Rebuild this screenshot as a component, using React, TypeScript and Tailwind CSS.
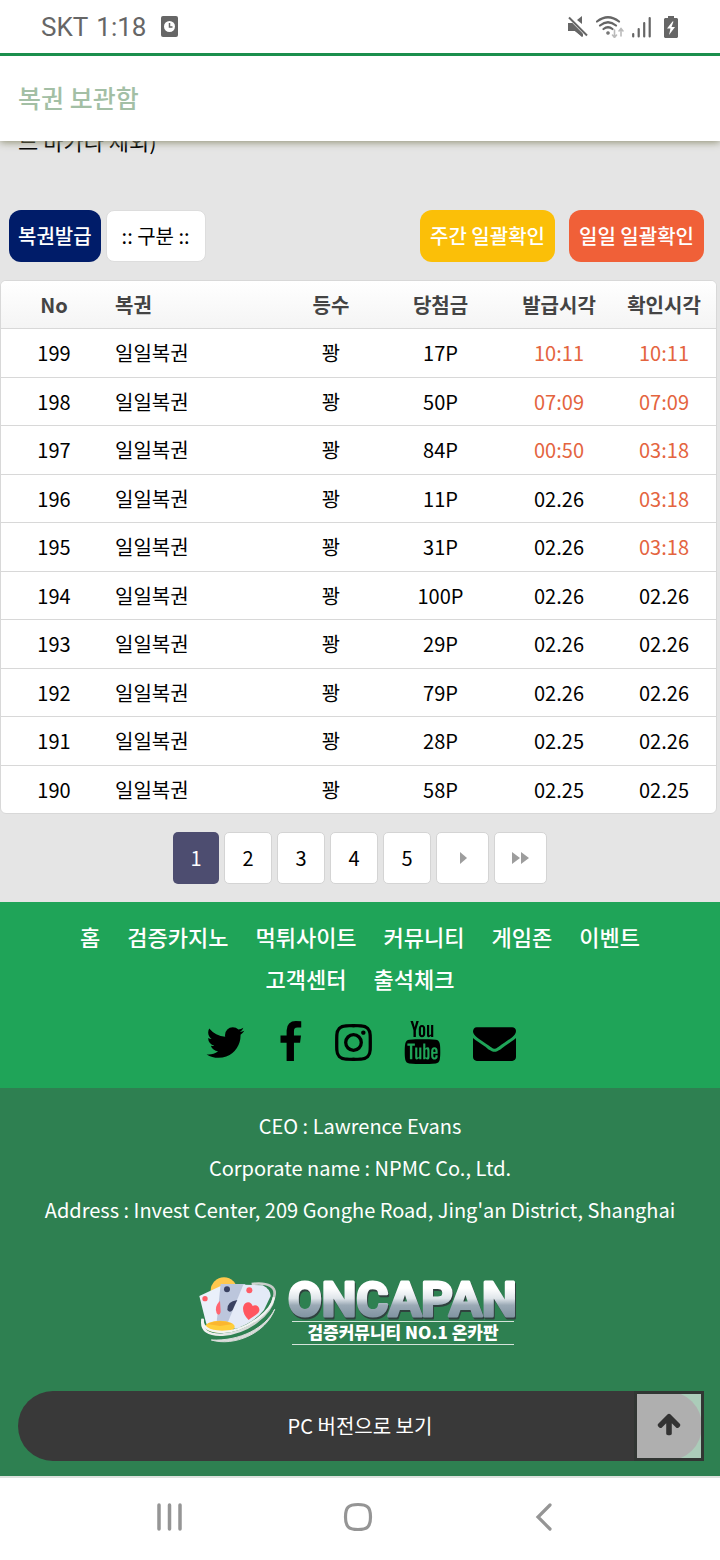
import type { ReactNode } from "react";
import { TfiYoutube } from "react-icons/tfi";

const tickets = [
  { no: 199, prize: "17P", issued: "10:11", checked: "10:11" },
  { no: 198, prize: "50P", issued: "07:09", checked: "07:09" },
  { no: 197, prize: "84P", issued: "00:50", checked: "03:18" },
  { no: 196, prize: "11P", issued: "02.26", checked: "03:18" },
  { no: 195, prize: "31P", issued: "02.26", checked: "03:18" },
  { no: 194, prize: "100P", issued: "02.26", checked: "02.26" },
  { no: 193, prize: "29P", issued: "02.26", checked: "02.26" },
  { no: 192, prize: "79P", issued: "02.26", checked: "02.26" },
  { no: 191, prize: "28P", issued: "02.25", checked: "02.26" },
  { no: 190, prize: "58P", issued: "02.25", checked: "02.25" },
];

const menu = ["홈", "검증카지노", "먹튀사이트", "커뮤니티", "게임존", "이벤트", "고객센터", "출석체크"];

const twitterPath =
  "M1684 408q-67 98-162 167 1 14 1 42 0 130-38 259.5t-115.5 248.5-184.5 210.5-258 146-323 54.5q-271 0-496-145 35 4 78 4 225 0 401-138-105-2-188-64.5t-114-159.5q33 5 61 5 43 0 85-11-112-23-185.5-111.5t-73.5-205.5v-4q68 38 146 41-66-44-105-115t-39-154q0-88 44-163 121 149 294.5 238.5t371.5 99.5q-8-38-8-74 0-134 94.5-228.5t228.5-94.5q140 0 236 102 109-21 205-78-37 115-142 178 93-10 186-50z";
const facebookPath =
  "M1343 12v264h-157q-86 0-116 36t-30 108v189h293l-39 296h-254v759h-306v-759h-255v-296h255v-218q0-186 104-288.5t277-102.5q147 0 228 12z";
const instagramPath =
  "M1152 896q0-106-75-181t-181-75-181 75-75 181 75 181 181 75 181-75 75-181zm138 0q0 164-115 279t-279 115-279-115-115-279 115-279 279-115 279 115 115 279zm108-410q0 38-27 65t-65 27-65-27-27-65 27-65 65-27 65 27 27 65zm-502-220q-7 0-76.5-.5t-105.5 0-96.5 3-103 10-71.5 18.5q-50 20-88 58t-58 88q-11 29-18.5 71.5t-10 103-3 96.5 0 105.5.5 76.5-.5 76.5 0 105.5 3 96.5 10 103 18.5 71.5q20 50 58 88t88 58q29 11 71.5 18.5t103 10 96.5 3 105.5 0 76.5-.5 76.5.5 105.5 0 96.5-3 103-10 71.5-18.5q50-20 88-58t58-88q11-29 18.5-71.5t10-103 3-96.5 0-105.5-.5-76.5.5-76.5 0-105.5-3-96.5-10-103-18.5-71.5q-20-50-58-88t-88-58q-29-11-71.5-18.5t-103-10-96.5-3-105.5 0-76.5.5zm768 630q0 229-5 317-10 208-124 322t-322 124q-88 5-317 5t-317-5q-208-10-322-124t-124-322q-5-88-5-317t5-317q10-208 124-322t322-124q88-5 317-5t317 5q208 10 322 124t124 322q5 88 5 317z";
const envelopePath =
  "M1792 710v794q0 66-47 113t-113 47h-1472q-66 0-113-47t-47-113v-794q44 49 101 87 362 246 497 345 57 42 92.5 65.5t94.5 48 110 24.5h2q51 0 110-24.5t94.5-48 92.5-65.5q170-123 498-345 57-39 100-87zm0-294q0 79-49 151t-122 123q-376 261-468 325-10 7-42.5 31t-54 38.5-52 32.5-57.5 27-50 9h-2q-23 0-50-9t-57.5-27-52-32.5-54-38.5-42.5-31q-91-64-262-182.5t-205-142.5q-62-42-117-115.5t-55-136.5q0-78 41.5-130t118.5-52h1472q65 0 112.5 47t47.5 113z";
const arrowUpPath =
  "M1675 971q0 51-37 90l-75 75q-38 38-91 38-54 0-90-38l-294-293v704q0 52-37.5 84.5t-90.5 32.5h-128q-53 0-90.5-32.5t-37.5-84.5v-704l-294 293q-36 38-90 38t-90-38l-75-75q-38-38-38-90 0-53 38-91l651-651q35-37 90-37 54 0 91 37l651 651q37 39 37 91z";

function StatusBar() {
  return (
    <div className="flex h-[53px] items-center justify-between bg-white px-[41px] font-[Roboto,sans-serif] text-[26px] text-[#666]">
      <div className="flex items-center gap-2 pt-0.5">
        <span>SKT</span>
        <span>1:18</span>
        <svg className="ml-1 h-[22px] w-[22px]" viewBox="0 0 22 22" fill="none">
          <rect x="3" y="0" width="17" height="21" rx="2" fill="#666" />
          <circle cx="11.500" cy="10.500" r="5.500" fill="#fff" />
          <path d="M11.500 7V11H14.500" stroke="#666" strokeWidth="1.500" />
        </svg>
      </div>
      <div className="flex items-center gap-2">
        <svg className="h-[22px] w-[20px]" viewBox="0 0 20 22" fill="#666">
          <path d="M0 7h5l10 10v4L7 15H0zM9 4l5-4v8z" />
          <path d="M1 1l18 18" stroke="#fff" strokeWidth="4" />
          <path d="M0 7h4l10 10v4L7 15H0z" />
          <path d="M1 1.500l18 18" stroke="#666" strokeWidth="2" />
        </svg>
        <svg className="h-[22px] w-[28px]" viewBox="0 0 28 22" fill="none" stroke="#666" strokeWidth="2.200" strokeLinecap="round">
          <path d="M1 5.500Q12 -3 23 5.500M4 9.500Q12 3 20 9.500M7.500 13Q12 9.500 16.500 13" />
          <circle cx="12" cy="17" r="0.700" />
          <path d="M18.500 14v7m-2-2l2 2.500 2-2.500M25 20v-7m-2 2l2-2.500 2 2.500" stroke="#bbb" strokeWidth="1.600" />
        </svg>
        <svg className="h-[22px] w-[19px]" viewBox="0 0 19 22" stroke="#666" strokeWidth="2.200" strokeLinecap="round">
          <path d="M1.200 18v2.500M6.700 13v7.500M12.200 7v13.500M17.700 2v18.500" />
        </svg>
        <svg className="ml-1 h-[22px] w-[16px]" viewBox="0 0 16 22">
          <path d="M5 0h6v2h3l1 1v18l-1 1H2l-1-1V3l1-1h3z" fill="#666" />
          <path d="M9.500 5.500L4 12.500h3.500L6 19l6-8H8.500l2-5.500z" fill="#fff" />
        </svg>
      </div>
    </div>
  );
}

function PageButton({ label, className, children }: { label: string; className: string; children: ReactNode }) {
  return (
    <button type="button" aria-label={label} className={`flex h-[52px] items-center justify-center rounded-[5px] ${className}`}>
      {children}
    </button>
  );
}

function SocialLink({ label, className, path }: { label: string; className: string; path: string }) {
  return (
    <a href="#" aria-label={label} className={className}>
      <svg className="h-[43px] w-[43px]" viewBox="0 0 1792 1792">
        <path d={path} />
      </svg>
    </a>
  );
}

function Logo() {
  return (
    <svg className="h-[100px] w-[340px]" viewBox="0 0 340 100" role="img" aria-label="ONCAPAN">
      <defs>
        <linearGradient id="metal" x1="0" y1="0" x2="0" y2="1">
          <stop offset="0.300" stopColor="#fff" />
          <stop offset="0.480" stopColor="#dfe5ea" />
          <stop offset="0.600" stopColor="#9aa9b5" />
          <stop offset="0.820" stopColor="#8093a1" />
        </linearGradient>
        <linearGradient id="ring" x1="0" y1="0" x2="1" y2="0">
          <stop offset="0" stopColor="#f5f5f5" />
          <stop offset="1" stopColor="#c3c8c5" />
        </linearGradient>
      </defs>
      <g transform="scale(0.3333)">
        <path d="M185 72C235 66 262 80 252 112C242 168 170 218 98 224C56 226 32 212 38 178" fill="none" stroke="url(#ring)" strokeWidth="8" />
        <circle cx="102" cy="92" r="40" fill="#ffc84d" />
        <path d="M28 108L92 78L140 196L62 212Q50 200 46 180z" fill="#eaf0fa" />
        <path d="M92 72H166L150 205L78 205z" fill="#bcc6dc" />
        <path d="M160 74L218 76Q240 86 242 108L222 150Q190 190 136 206L110 196z" fill="#e4eaf7" />
        <circle cx="45" cy="116" r="8" fill="#ff5c66" />
        <circle cx="111" cy="88" r="9" fill="#3a4160" />
        <circle cx="178" cy="91" r="9" fill="#ff5c66" />
        <path d="M90 122Q72 140 80 160Q88 170 92 156z" fill="#ff6570" />
        <path d="M142 120Q110 124 112 150Q120 160 128 150Q134 136 142 120z" fill="#3a4160" />
        <path d="M176 180C158 164 154 140 166 130C176 122 186 130 188 138C198 132 210 140 208 152C204 164 188 170 176 180z" fill="#ff565f" />
        <ellipse cx="90" cy="200" rx="44" ry="18" fill="#ffce3b" />
        <path d="M52 192Q90 174 128 192L90 198z" fill="#fbb62f" />
        <path d="M38 176Q34 214 96 216Q150 216 206 174Q246 144 252 112" fill="none" stroke="#f2f4f2" strokeWidth="7" />
        <path d="M64 240C130 260 226 222 254 148C226 204 150 244 64 240z" fill="#d9dcda" stroke="#d9dcda" strokeWidth="3" />
      </g>
      <text
        x="98"
        y="56"
        fontSize="49"
        fill="url(#metal)"
        stroke="url(#metal)"
        strokeWidth="3"
        strokeLinejoin="round"
        className="font-[Roboto,sans-serif] font-bold drop-shadow-[1px_2px_0_#2f423e]"
      >
        ONCAPAN
      </text>
      <path d="M102 61.500H324M102 84.500H324" stroke="#d5e3da" strokeWidth="1" />
      <text x="213" y="79" textAnchor="middle" fontSize="17" fill="#fff" className="font-['Noto_Sans_CJK_KR',sans-serif] font-black">
        검증커뮤니티 NO.1 온카판
      </text>
    </svg>
  );
}

export default function App() {
  return (
    <div className="bg-[#e5e5e5] font-['Noto_Sans_CJK_KR',sans-serif] text-xl text-black">
      <header className="relative z-10 bg-white shadow-[0_1px_8px_#8a8a6c]">
        <StatusBar />
        <div className="flex h-[88px] items-center border-t-3 border-[#1b8f4d] px-[18px] pb-0.5">
          <h1 className="text-[25px] font-medium text-[#a3bfa5]">복권 보관함</h1>
        </div>
      </header>

      <main>
        <div className="flex h-[18px] items-end overflow-hidden px-[18px]">
          <p className="text-[22px] leading-[38px]">드 바카라 제외)</p>
        </div>

        <div className="flex items-center justify-between pt-[51px] pr-4 pl-[9px]">
          <div className="flex items-center gap-[5px]">
            <button type="button" className="h-[52px] rounded-xl bg-[#001c69] px-[9px] font-medium text-white">
              복권발급
            </button>
            <select aria-label="구분" className="h-[52px] w-[100px] appearance-none rounded-lg border border-[#ddd] bg-white text-center">
              <option>:: 구분 ::</option>
            </select>
          </div>
          <div className="flex gap-[14px]">
            <button type="button" className="h-[52px] w-[135px] rounded-xl bg-[#fbbf08] font-medium text-white">
              주간 일괄확인
            </button>
            <button type="button" className="h-[52px] w-[135px] rounded-xl bg-[#f06038] font-medium text-white">
              일일 일괄확인
            </button>
          </div>
        </div>

        <div className="mt-[18px] mr-[3px] overflow-hidden rounded-md border border-[#d8d8d8] bg-white">
          <table className="w-full table-fixed border-separate border-spacing-0 text-center leading-7">
            <colgroup>
              <col className="w-[106px]" />
              <col />
              <col className="w-[88px]" />
              <col className="w-[131px]" />
              <col className="w-[106px]" />
              <col className="w-[104px]" />
            </colgroup>
            <thead className="bg-linear-to-b from-white to-[#f4f4f4] text-[#444]">
              <tr className="h-12 *:border-b *:border-[#d8d8d8] *:p-0 *:font-bold">
                <th>No</th>
                <th className="text-left">
                  <span className="pl-2">복권</span>
                </th>
                <th>등수</th>
                <th>당첨금</th>
                <th>발급시각</th>
                <th>확인시각</th>
              </tr>
            </thead>
            <tbody>
              {tickets.map((t) => (
                <tr key={t.no} className="h-12 odd:h-[49px] last:h-[47px] *:border-b *:border-[#d8d8d8] *:p-0 last:*:border-b-0">
                  <td>{t.no}</td>
                  <td className="text-left">
                    <span className="pl-2">일일복권</span>
                  </td>
                  <td>꽝</td>
                  <td>{t.prize}</td>
                  {[t.issued, t.checked].map((time, i) => (
                    <td key={i} className={time.includes(":") ? "text-[#e4643e]" : ""}>
                      {time}
                    </td>
                  ))}
                </tr>
              ))}
            </tbody>
          </table>
        </div>

        <nav aria-label="페이지" className="flex justify-center gap-[5px] py-[18px]">
          <PageButton label="1" className="w-[46px] bg-[#4d4d70] text-white">
            1
          </PageButton>
          {["2", "3", "4", "5"].map((n) => (
            <PageButton key={n} label={n} className="w-12 border border-[#d4d4d4] bg-white">
              {n}
            </PageButton>
          ))}
          <PageButton label="다음" className="w-[53px] border border-[#d4d4d4] bg-white">
            <svg className="h-3 w-2" viewBox="0 0 8 12" fill="#9d9d9d">
              <path d="M1 0l7 6-7 6z" />
            </svg>
          </PageButton>
          <PageButton label="맨끝" className="w-[53px] border border-[#d4d4d4] bg-white">
            <svg className="h-3 w-[17px]" viewBox="0 0 17 12" fill="#9d9d9d">
              <path d="M0 0l8 6-8 6zM9 0l8 6-8 6z" />
            </svg>
          </PageButton>
        </nav>
      </main>

      <footer>
        <div className="bg-[#1fa458] px-8 pt-[13px] pb-6">
          <nav className="flex flex-wrap justify-center gap-x-[27px] text-[22px] leading-[42px] font-medium text-white">
            {menu.map((m) => (
              <a key={m} href="#">
                {m}
              </a>
            ))}
          </nav>
          <div className="mt-[22px] flex items-center justify-center">
            <SocialLink label="Twitter" className="mr-[22px]" path={twitterPath} />
            <SocialLink label="Facebook" className="mr-5" path={facebookPath} />
            <SocialLink label="Instagram" className="mr-[26px]" path={instagramPath} />
            <a href="#" aria-label="YouTube" className="mr-[29px]">
              <TfiYoutube className="h-[43px] w-[43px]" />
            </a>
            <SocialLink label="E-mail" className="" path={envelopePath} />
          </div>
        </div>

        <div className="bg-[#2e8051] px-[18px] pt-[17px] pb-[15px] text-center text-white">
          <address className="leading-[42px] not-italic">
            <p>CEO : Lawrence Evans</p>
            <p>Corporate name : NPMC Co., Ltd.</p>
            <p>Address : Invest Center, 209 Gonghe Road, Jing'an District, Shanghai</p>
          </address>
          <a href="#" className="mt-[29px] mb-[31px] flex justify-center">
            <Logo />
          </a>
          <div className="relative">
            <button type="button" className="h-[70px] w-full rounded-full bg-[#393939]">
              PC 버전으로 보기
            </button>
            <button
              type="button"
              aria-label="상단으로"
              className="absolute top-0 -right-0.5 flex h-[70px] w-[70px] items-center justify-center border-3 border-[#313633] bg-white/60 bg-clip-padding pb-1"
            >
              <svg className="h-[26px] w-[26px]" viewBox="0 0 1792 1792" fill="#333">
                <path d={arrowUpPath} />
              </svg>
            </button>
          </div>
        </div>
      </footer>

      <div className="flex h-[84px] items-center justify-between border-t-2 border-[#dde2de] bg-white pr-[160px] pb-1 pl-[155px] text-[#959595]">
        <button type="button" aria-label="최근 앱">
          <svg className="h-[30px] w-[30px]" viewBox="0 0 30 30" stroke="currentColor" strokeWidth="3.500" strokeLinecap="round">
            <path d="M4 3v24M14.500 3v24M25 3v24" />
          </svg>
        </button>
        <button type="button" aria-label="홈 화면">
          <svg className="h-[30px] w-[30px]" viewBox="0 0 30 30" fill="none" stroke="currentColor" strokeWidth="3.200">
            <path d="M15 2.500C24.500 2.500 27.500 5.500 27.500 15S24.500 27.500 15 27.500 2.500 24.500 2.500 15 5.500 2.500 15 2.500z" />
          </svg>
        </button>
        <button type="button" aria-label="뒤로">
          <svg className="h-[30px] w-[30px]" viewBox="-6 0 30 30" fill="none" stroke="currentColor" strokeWidth="3.200" strokeLinecap="round">
            <path d="M14 3L2 15l12 12" />
          </svg>
        </button>
      </div>
    </div>
  );
}
